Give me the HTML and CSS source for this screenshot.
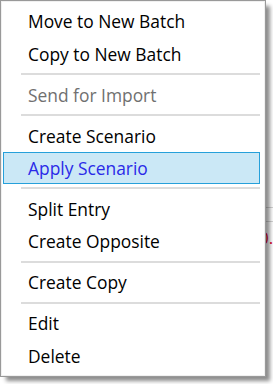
FILE: index.html
```html
<!DOCTYPE html>
<html>
<head>
<meta charset="utf-8">
<link rel="stylesheet" href="styles.css">
</head>
<body>
<div class="page">
  <div class="backdrop">
    <div class="row"></div>
    <div class="row"></div>
    <div class="row value">0.</div>
  </div>
  <div class="menu">
    <div class="menu-body">
      <div class="item">Move to New Batch</div>
      <div class="item">Copy to New Batch</div>
      <div class="sep"></div>
      <div class="item disabled">Send for Import</div>
      <div class="sep"></div>
      <div class="item">Create Scenario</div>
      <div class="item active">Apply Scenario</div>
      <div class="sep"></div>
      <div class="item">Split Entry</div>
      <div class="item">Create Opposite</div>
      <div class="sep"></div>
      <div class="item">Create Copy</div>
      <div class="sep"></div>
      <div class="item">Edit</div>
      <div class="item">Delete</div>
    </div>
  </div>
</div>
</body>
</html>
```
FILE: styles.css
```css
html, body {
  margin: 0;
  padding: 0;
  background: #ffffff;
}
.page {
  position: relative;
  width: 273px;
  height: 384px;
  overflow: hidden;
  font-family: "Open Sans", "Noto Sans", sans-serif;
}
.backdrop {
  position: absolute;
  left: 240px;
  top: 194px;
  width: 33px;
  display: flex;
  flex-direction: column;
}
.backdrop .row {
  height: 13px;
  border-bottom: 1px solid #d4d4d4;
}
.backdrop .value {
  border-bottom: none;
  height: 20px;
  padding-top: 6px;
  padding-left: 19px;
  color: #e0002a;
  font-size: 17px;
  line-height: 20px;
  white-space: nowrap;
}
.menu {
  position: absolute;
  left: 0;
  top: 0;
  width: 266px;
  height: 377px;
  box-sizing: border-box;
  border: 1px solid #999999;
  background: #f0f0f0;
  padding: 1px;
  box-shadow: 5px 5px 4px -1px rgba(0, 0, 0, 0.45);
}
.menu-body {
  background: #ffffff;
  height: 100%;
  box-sizing: border-box;
  padding: 3px 4px 2px 1px;
  display: flex;
  flex-direction: column;
}
.item {
  height: 32.5px;
  flex: none;
  box-sizing: border-box;
  display: flex;
  align-items: center;
  padding-left: 25px;
  font-size: 17.4px;
  color: #000000;
  white-space: nowrap;
}
.item.disabled {
  color: #707070;
}
.item.active {
  border: 1px solid #26a0da;
  background: #cbe8f6;
  padding-left: 24px;
  color: #2a2ae8;
}
.sep {
  height: 8.4px;
  flex: none;
  display: flex;
  align-items: center;
  padding-left: 18px;
}
.sep::after {
  content: "";
  flex: 1;
  height: 2px;
  background: #dcdcdc;
}
```
